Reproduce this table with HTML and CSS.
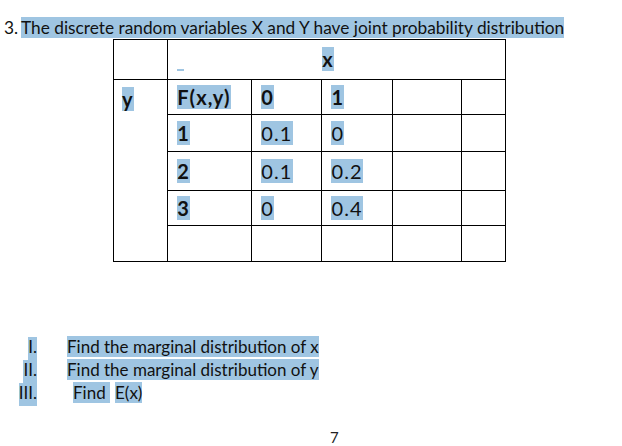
FILE: index.html
```html
<!DOCTYPE html>
<html>
<head>
<meta charset="utf-8">
<link rel="stylesheet" href="styles.css">
</head>
<body>
<p class="q"><span class="num">3.</span> <span class="hl">The discrete random variables X and Y have joint probability distribution</span></p>
<table class="dist">
  <colgroup>
    <col class="c1"><col class="c2"><col class="c3"><col class="c4"><col class="c5"><col class="c6">
  </colgroup>
  <tr class="r0">
    <td></td>
    <td colspan="5" class="head"><span class="mark"></span><span class="hl b xh">x</span></td>
  </tr>
  <tr class="r1">
    <td rowspan="5" class="ycell"><span class="hl b">y</span></td>
    <td><span class="hl b">F(x,y)</span></td>
    <td><span class="hl b">0</span></td>
    <td><span class="hl b">1</span></td>
    <td></td>
    <td></td>
  </tr>
  <tr class="r2">
    <td><span class="hl b">1</span></td>
    <td><span class="hl">0.1</span></td>
    <td><span class="hl">0</span></td>
    <td></td>
    <td></td>
  </tr>
  <tr class="r3">
    <td><span class="hl b">2</span></td>
    <td><span class="hl">0.1</span></td>
    <td><span class="hl">0.2</span></td>
    <td></td>
    <td></td>
  </tr>
  <tr class="r4">
    <td><span class="hl b">3</span></td>
    <td><span class="hl">0</span></td>
    <td><span class="hl">0.4</span></td>
    <td></td>
    <td></td>
  </tr>
  <tr class="r5">
    <td></td>
    <td></td>
    <td></td>
    <td></td>
    <td></td>
  </tr>
</table>
<ol class="tasks">
  <li><span class="rn"><span class="hl">I.</span></span><span class="txt"><span class="hl">Find the marginal distribution of x </span></span></li>
  <li><span class="rn"><span class="hl">II.</span></span><span class="txt"><span class="hl">Find the marginal distribution of y</span></span></li>
  <li><span class="rn"><span class="hl">III.</span></span><span class="txt t3"><span class="hl">Find </span><span class="hl ex">E(x)</span></span></li>
</ol>
<div class="page">7</div>
</body>
</html>
```
FILE: styles.css
```css
html, body {
  margin: 0;
  padding: 0;
  background: #fff;
}
body {
  font-family: Lato, "Open Sans", sans-serif;
  font-size: 16px;
  color: #111;
  width: 622px;
  height: 446px;
  overflow: hidden;
}
.hl {
  background: #9fc5e2;
}
.b {
  font-weight: 700;
}
.q {
  margin: 0;
  padding: 18px 0 0 4px;
  line-height: 20px;
  height: 21px;
  font-size: 17.3px;
  white-space: nowrap;
}
.num {
  margin-right: -1px;
}
.dist {
  border-collapse: collapse;
  margin-left: 113px;
  table-layout: fixed;
  width: 393px;
}
.dist td {
  border: 1.5px solid #000;
  padding: 0 0 0 9px;
  height: 36px;
  vertical-align: middle;
  font-size: 20px;
  letter-spacing: 1.1px;
  line-height: 22px;
  white-space: nowrap;
}
.dist tr.r0 td { height: 39px; }
.dist tr.r1 td { height: 34px; }
.dist tr.r2 td { height: 36px; }
.dist tr.r3 td { height: 38px; }
.dist tr.r4 td { height: 34px; }
.dist tr.r5 td { height: 35px; }
.c1 { width: 54px; }
.c2 { width: 84px; }
.c3 { width: 70px; }
.c4 { width: 70px; }
.c5 { width: 69px; }
.c6 { width: 44px; }
.dist td.ycell {
  vertical-align: top;
  padding-top: 8px;
  padding-left: 8px;
}
.mark {
  display: inline-block;
  width: 7px;
  height: 2px;
  background: #9fc5e2;
  vertical-align: -4px;
}
.xh {
  margin-left: 138px;
}
.tasks {
  list-style: none;
  margin: 75px 0 0 0;
  padding: 0;
}
.tasks li {
  display: flex;
  height: 23px;
  line-height: 19px;
  font-size: 17px;
  white-space: nowrap;
}
.rn {
  width: 37px;
  display: flex;
  justify-content: flex-end;
}
.txt {
  margin-left: 30px;
}
.txt.t3 {
  margin-left: 36px;
}
.ex {
  margin-left: 5px;
}
.page {
  position: absolute;
  left: 330px;
  top: 428px;
  font-size: 15px;
  line-height: 18px;
  color: #222;
}
```
